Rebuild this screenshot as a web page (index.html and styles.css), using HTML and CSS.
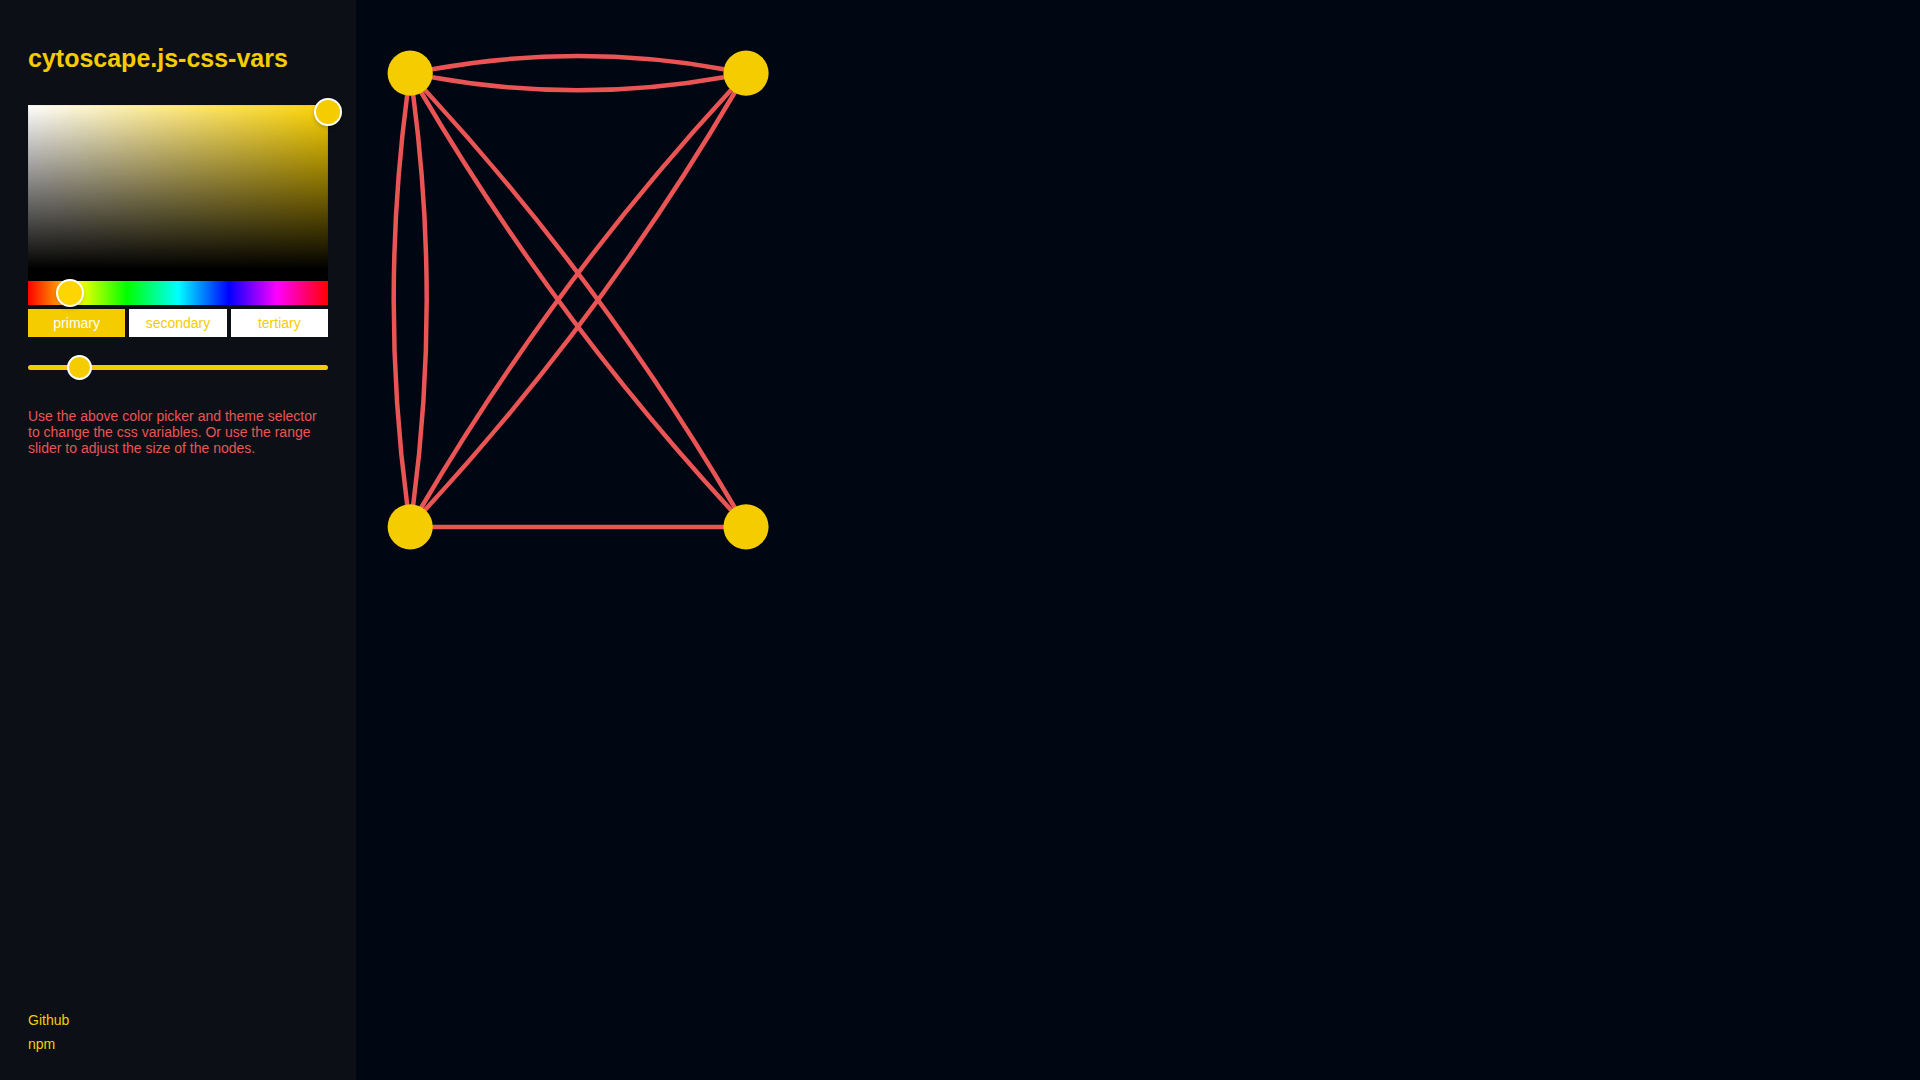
FILE: index.html
```html
<!doctype html>
<html lang="en">
  <head>
    <meta charset="UTF-8" />
    <meta name="viewport" content="width=device-width, initial-scale=1.0" />
    <title>cytoscape.js-css-vars</title>
    <link rel="stylesheet" href="styles.css" />
  </head>
  <body>
    <aside class="sidebar">
      <h1>cytoscape.js-css-vars</h1>

      <div class="color-picker">
        <div class="saturation" role="slider" tabindex="0" aria-label="Color" aria-valuenow="96">
          <div class="saturation-pointer"></div>
        </div>
        <input class="hue" type="range" min="0" max="360" value="37" aria-label="Hue" />
      </div>

      <div class="theme-select">
        <button type="button" class="active">primary</button>
        <button type="button">secondary</button>
        <button type="button">tertiary</button>
      </div>

      <div class="size-slider">
        <input class="size" type="range" min="0" max="100" value="14" aria-label="Node size" />
      </div>

      <p>
        Use the above color picker and theme selector to change the css
        variables. Or use the range slider to adjust the size of the nodes.
      </p>

      <nav class="links">
        <a href="#github">Github</a>
        <a href="#npm">npm</a>
      </nav>
    </aside>

    <main class="graph">
      <svg width="444" height="600" viewBox="0 0 444 600" role="img" aria-label="Graph">
        <g class="edges">
          <path d="M76 69.2 Q222 43 368 69.2" />
          <path d="M76 77.2 Q222 103.4 368 77.2" />
          <path d="M51.2 95 Q24.2 300 51.2 505" />
          <path d="M57.2 95 Q84.2 300 57.2 505" />
          <path d="M69 90 Q246 282 379 508" />
          <path d="M65 92 Q198 318 375 510" />
          <path d="M375 90 Q198 282 65 508" />
          <path d="M379 92 Q246 318 69 510" />
          <path d="M76 526.9 H368" />
        </g>
        <g class="nodes">
          <circle cx="54.2" cy="73.2" r="22.6" />
          <circle cx="390" cy="73.2" r="22.6" />
          <circle cx="54.2" cy="526.8" r="22.6" />
          <circle cx="390" cy="526.8" r="22.6" />
        </g>
      </svg>
    </main>
  </body>
</html>
```

FILE: styles.css
```css
:root {
  --primary: #f5cc00;
  --secondary: #ea5455;
  --background: #000712;
  --sidebar: #0c0f16;
  --hue-color: #ffd500;
}

* {
  box-sizing: border-box;
}

body {
  margin: 0;
  display: flex;
  min-height: 100vh;
  background: var(--background);
  font-family: "Liberation Sans", Arial, Helvetica, sans-serif;
  font-size: 14px;
  line-height: 16px;
}

.sidebar {
  display: flex;
  flex-direction: column;
  flex: none;
  width: 356px;
  padding: 28px;
  background: var(--sidebar);
}

h1 {
  margin: 16px 0 32px;
  font-size: 25px;
  line-height: 29px;
  color: var(--primary);
}

p {
  margin: 28px 0;
  color: var(--secondary);
}

/* color picker */
.color-picker {
  display: flex;
  flex-direction: column;
  height: 200px;
}

.saturation {
  position: relative;
  flex: 1;
  border-bottom: 12px solid #000;
  background-color: var(--hue-color);
  background-image:
    linear-gradient(0deg, #000, transparent),
    linear-gradient(90deg, #fff, rgba(255, 255, 255, 0));
  box-shadow: inset 0 0 0 1px rgba(0, 0, 0, 0.05);
}

.saturation-pointer {
  position: absolute;
  z-index: 1;
  top: 4%;
  left: 100%;
  width: 28px;
  height: 28px;
  transform: translate(-50%, -50%);
  border: 2px solid #fff;
  border-radius: 50%;
  background: var(--primary);
  box-shadow: 0 2px 4px rgba(0, 0, 0, 0.2);
}

input[type="range"] {
  -webkit-appearance: none;
  appearance: none;
  display: block;
  width: 100%;
  margin: 0;
  background: none;
  cursor: pointer;
}

input[type="range"]::-webkit-slider-thumb {
  -webkit-appearance: none;
  border: 2px solid #fff;
  border-radius: 50%;
}

/* keeps the thumb above the saturation area */
.hue {
  position: relative;
  z-index: 1;
  height: 24px;
}

.hue::-webkit-slider-runnable-track {
  height: 24px;
  background: linear-gradient(
    to right,
    #f00 0%,
    #ff0 17%,
    #0f0 33%,
    #0ff 50%,
    #00f 67%,
    #f0f 83%,
    #f00 100%
  );
}

.hue::-webkit-slider-thumb {
  width: 28px;
  height: 28px;
  margin-top: -2px;
  background: var(--hue-color);
  box-shadow: 0 2px 4px rgba(0, 0, 0, 0.2);
}

/* theme buttons */
.theme-select {
  display: grid;
  grid-template-columns: repeat(3, 1fr);
  gap: 4px;
  margin-top: 4px;
}

.theme-select button {
  height: 28px;
  padding: 0;
  border: none;
  background: #fff;
  color: var(--primary);
  font: inherit;
  cursor: pointer;
}

.theme-select .active {
  background: var(--primary);
  color: #fff;
}

/* node size */
.size-slider {
  margin-top: 18px;
}

.size {
  height: 25px;
}

.size::-webkit-slider-runnable-track {
  height: 5px;
  border-radius: 5px;
  background: var(--primary);
}

.size::-webkit-slider-thumb {
  width: 25px;
  height: 25px;
  margin-top: -10px;
  background: var(--primary);
}

.links {
  display: flex;
  flex-direction: column;
  align-items: flex-start;
  gap: 8px;
  margin-top: auto;
}

.links a {
  color: var(--primary);
  text-decoration: none;
}

/* graph */
.graph {
  flex: 1;
  min-width: 0;
}

.graph svg {
  display: block;
}

.edges {
  fill: none;
  stroke: var(--secondary);
  stroke-width: 4.5;
}

.nodes {
  fill: var(--primary);
}
```
